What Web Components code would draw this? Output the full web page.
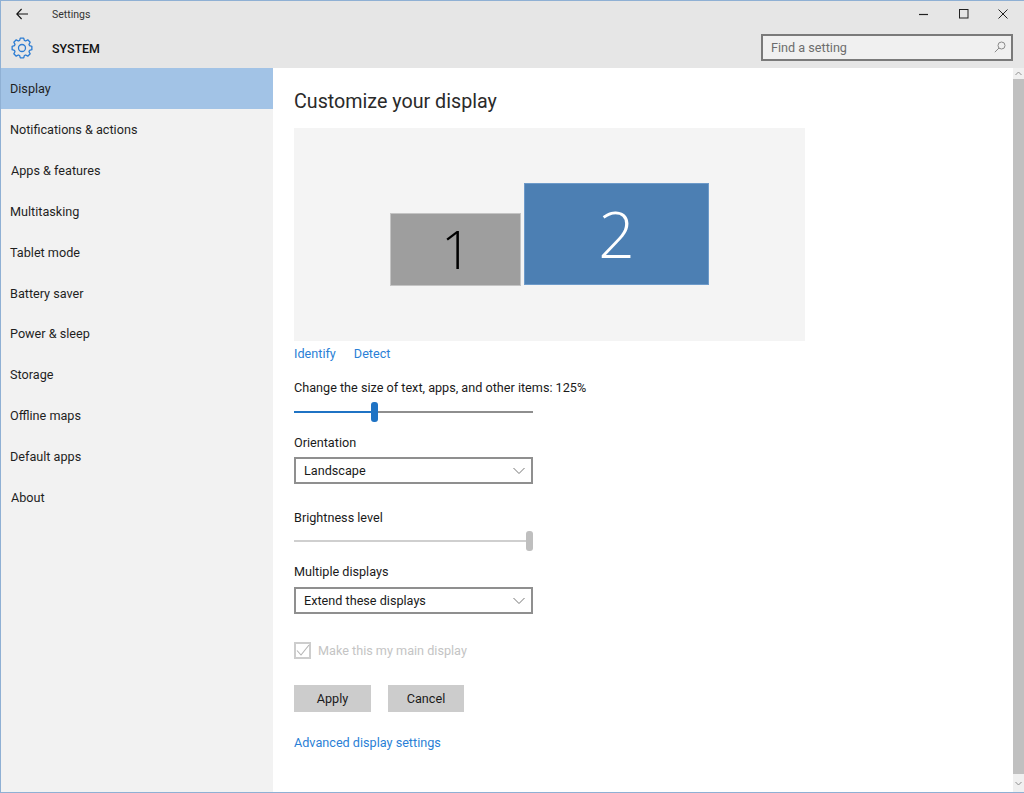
<!DOCTYPE html>
<html>
<head>
<meta charset="utf-8">
<title>Settings</title>
<style>
  html, body { margin: 0; padding: 0; height: 100%; overflow: hidden; background: #fff; }
  body { font-family: Roboto, "Noto Sans", sans-serif; font-size: 12.65px; color: #1a1a1a; }
</style>
</head>
<body>
<settings-window>
  <title-bar slot="header"></title-bar>
  <side-nav slot="nav">
    <nav-item selected>Display</nav-item>
    <nav-item>Notifications &amp; actions</nav-item>
    <nav-item style="padding-left:10px">Apps &amp; features</nav-item>
    <nav-item>Multitasking</nav-item>
    <nav-item>Tablet mode</nav-item>
    <nav-item>Battery saver</nav-item>
    <nav-item>Power &amp; sleep</nav-item>
    <nav-item>Storage</nav-item>
    <nav-item>Offline maps</nav-item>
    <nav-item>Default apps</nav-item>
    <nav-item style="padding-left:10px">About</nav-item>
  </side-nav>
  <display-page slot="main"></display-page>
  <scroll-bar slot="scroll"></scroll-bar>
</settings-window>

<script>
// 8 tooth gear outline, generated so the teeth stay even
function gearPath(cx, cy, outer, inner) {
  const points = [];
  for (let i = 0; i < 8; i++) {
    const a = (i * Math.PI) / 4;
    [[-0.3, inner], [-0.17, outer], [0.17, outer], [0.3, inner]].forEach(([d, r]) => {
      points.push((cx + r * Math.cos(a + d)).toFixed(2) + " " + (cy + r * Math.sin(a + d)).toFixed(2));
    });
  }
  return "M" + points.join("L") + "Z";
}

class SettingsWindow extends HTMLElement {
  constructor() {
    super();
    this.attachShadow({ mode: "open" });
    this.shadowRoot.innerHTML = `
      <style>
        :host { display: flex; flex-direction: column; box-sizing: border-box; width: 1024px; height: 793px;
          border: 1px solid #8fb0d4; border-right: 0; background: #fff; }
        .body { flex: 1; display: flex; min-height: 0; }
        ::slotted(side-nav) { flex: none; }
        ::slotted(display-page) { flex: 1; }
      </style>
      <slot name="header"></slot>
      <div class="body">
        <slot name="nav"></slot>
        <slot name="main"></slot>
        <slot name="scroll"></slot>
      </div>`;
  }
}
customElements.define("settings-window", SettingsWindow);

class TitleBar extends HTMLElement {
  constructor() {
    super();
    this.attachShadow({ mode: "open" });
    this.shadowRoot.innerHTML = `
      <style>
        :host { display: block; height: 67px; background: #e6e6e6; color: #1a1a1a; }
        .top { display: flex; align-items: center; height: 25px; }
        .back { width: 51px; padding-left: 15px; box-sizing: border-box; display: flex; }
        .name { flex: 1; font-size: 10.5px; color: #333; padding-top: 1px; }
        .caption { display: flex; padding-right: 1px; }
        .caption div { width: 39.5px; height: 25px; display: flex; align-items: center; justify-content: center; }
        .row { display: flex; align-items: center; box-sizing: border-box; height: 42px; padding: 2px 11px 0 10px; }
        .gear { width: 41px; display: flex; }
        .sys { flex: 1; font-size: 12.4px; font-weight: 500; color: #111; }
      </style>
      <div class="top">
        <div class="back">
          <svg width="12" height="12" viewBox="0 0 12 12" fill="none" stroke="#111" stroke-width="1.1">
            <path d="M.6 6H12M5.6 1 .8 6l4.8 5"/>
          </svg>
        </div>
        <div class="name">Settings</div>
        <div class="caption">
          <div><svg width="10" height="10"><path d="M0 5.5h9" stroke="#222" stroke-width="1.2"/></svg></div>
          <div><svg width="10" height="10"><rect x=".5" y=".5" width="8.5" height="8.5" fill="none" stroke="#222"/></svg></div>
          <div><svg width="10" height="10"><path d="M.5.5l9 9M9.5.5l-9 9" stroke="#222"/></svg></div>
        </div>
      </div>
      <div class="row">
        <div class="gear">
          <svg width="22" height="22" viewBox="0 0 22 22" fill="none" stroke="#2b7cd3" stroke-width="1.3" stroke-linejoin="round">
            <circle cx="11" cy="11" r="3.5"/>
            <path d="${gearPath(11, 11, 10, 7.9)}"/>
          </svg>
        </div>
        <div class="sys">SYSTEM</div>
        <search-box>Find a setting</search-box>
      </div>`;
  }
}
customElements.define("title-bar", TitleBar);

class SearchBox extends HTMLElement {
  constructor() {
    super();
    this.attachShadow({ mode: "open" });
    this.shadowRoot.innerHTML = `
      <style>
        :host { display: flex; align-items: center; box-sizing: border-box; width: 252px; height: 27px; margin-top: -2px;
          border: 2px solid #7a7a7a; background: #f0f0f0; padding: 0 5px 0 8px; color: #6d6d6d; font-size: 12.65px; }
        span { flex: 1; }
        svg { display: block; }
      </style>
      <span><slot></slot></span>
      <svg width="12" height="12" viewBox="0 0 12 12" fill="none" stroke="#8a8a8a">
        <circle cx="7.5" cy="4.5" r="3.5"/><path d="M5 7 .8 11.2"/>
      </svg>`;
  }
}
customElements.define("search-box", SearchBox);

class SideNav extends HTMLElement {
  constructor() {
    super();
    this.attachShadow({ mode: "open" });
    this.shadowRoot.innerHTML = `
      <style>
        :host { display: flex; flex-direction: column; width: 272px; background: #f2f2f2; }
      </style>
      <slot></slot>`;
  }
}
customElements.define("side-nav", SideNav);

class NavItem extends HTMLElement {
  constructor() {
    super();
    this.attachShadow({ mode: "open" });
    this.shadowRoot.innerHTML = `
      <style>
        :host { display: flex; align-items: center; box-sizing: border-box; height: 40.85px; padding: 1px 0 0 9px;
          font-size: 12.65px; color: #1f1f1f; }
        :host([selected]) { background: #a2c3e6; }
      </style>
      <slot></slot>`;
  }
}
customElements.define("nav-item", NavItem);

class DisplayPreview extends HTMLElement {
  constructor() {
    super();
    this.attachShadow({ mode: "open" });
    this.shadowRoot.innerHTML = `
      <style>
        :host { display: block; position: relative; width: 511px; height: 213px; background: #f4f4f4; }
        .mon { position: absolute; box-sizing: border-box; display: flex; align-items: center; justify-content: center;
          font-family: "Open Sans", sans-serif; font-weight: 300; line-height: 1; }
        .one { left: 96px; top: 85px; width: 131px; height: 73px; background: #9e9e9e; color: #000; border: 1px solid #c4c4c4;
          font-size: 53px; padding: 0 0 2px 2px; }
        .two { left: 230px; top: 55px; width: 185px; height: 102px; background: #4c7fb3; color: #fff; border: 1px solid #6d9ac9; font-size: 64px; }
      </style>
      <div class="mon one">1</div>
      <div class="mon two">2</div>`;
  }
}
customElements.define("display-preview", DisplayPreview);

class SettingLink extends HTMLElement {
  constructor() {
    super();
    this.attachShadow({ mode: "open" });
    this.shadowRoot.innerHTML = `
      <style>:host { display: inline-block; color: #2a7fd6; font-size: 12.65px; }</style>
      <slot></slot>`;
  }
}
customElements.define("setting-link", SettingLink);

class ValueSlider extends HTMLElement {
  static get observedAttributes() { return ["value", "disabled"]; }
  constructor() {
    super();
    this.attachShadow({ mode: "open" });
  }
  connectedCallback() { this.render(); }
  attributeChangedCallback() { this.render(); }
  render() {
    const value = this.getAttribute("value") || 0;
    this.shadowRoot.innerHTML = `
      <style>
        :host { display: block; position: relative; width: 239px; height: 20px; }
        .track { position: absolute; left: 0; right: 0; top: 9px; height: 2px; background: #8e8e8e; }
        .fill { position: absolute; left: 0; top: 9px; height: 2px; width: ${value}px; background: #1f73c4; }
        .thumb { position: absolute; top: 0; left: ${value - 4}px; width: 7px; height: 20px; border-radius: 3px; background: #1f73c4; }
        :host([disabled]) .track, :host([disabled]) .fill { background: #cfcfcf; }
        :host([disabled]) .thumb { background: #bfbfbf; }
      </style>
      <div class="track"></div>
      <div class="fill"></div>
      <div class="thumb"></div>`;
  }
}
customElements.define("value-slider", ValueSlider);

class ComboBox extends HTMLElement {
  constructor() {
    super();
    this.attachShadow({ mode: "open" });
    this.shadowRoot.innerHTML = `
      <style>
        :host { display: flex; align-items: center; box-sizing: border-box; width: 239px; height: 27px;
          border: 2px solid #8f8f8f; padding: 0 6px 0 8px; background: #fff; font-size: 12.65px; color: #1a1a1a; }
        span { flex: 1; }
      </style>
      <span><slot></slot></span>
      <svg width="12" height="8" viewBox="0 0 12 8" fill="none" stroke="#777"><path d="M.5 1 6 6.5 11.5 1"/></svg>`;
  }
}
customElements.define("combo-box", ComboBox);

class CheckRow extends HTMLElement {
  constructor() {
    super();
    this.attachShadow({ mode: "open" });
    this.shadowRoot.innerHTML = `
      <style>
        :host { display: flex; align-items: center; gap: 7px; color: #c4c4c4; font-size: 12.65px; }
        svg { display: block; }
      </style>
      <svg width="17" height="17" viewBox="0 0 17 17" fill="none" stroke="#cdcdcd">
        <rect x="1" y="1" width="15" height="15" stroke-width="2"/>
        <path d="M3 8.5 7 13 15 3" stroke-width="1.1" stroke="#b5b5b5"/>
      </svg>
      <span><slot></slot></span>`;
  }
}
customElements.define("check-row", CheckRow);

class PushButton extends HTMLElement {
  constructor() {
    super();
    this.attachShadow({ mode: "open" });
    this.shadowRoot.innerHTML = `
      <style>
        :host { display: flex; align-items: center; justify-content: center; width: 77px; height: 27px;
          background: #cccccc; font-size: 12.65px; color: #1a1a1a; }
      </style>
      <slot></slot>`;
  }
}
customElements.define("push-button", PushButton);

class ScrollBar extends HTMLElement {
  constructor() {
    super();
    this.attachShadow({ mode: "open" });
    this.shadowRoot.innerHTML = `
      <style>
        :host { display: flex; flex-direction: column; flex: none; width: 11px; background: #f0f0f0; }
        .btn { height: 11px; display: flex; align-items: center; justify-content: center; }
        .thumb { flex: 1; background: #c0c0c0; }
      </style>
      <div class="btn"><svg width="7" height="5" fill="none" stroke="#8f8f8f"><path d="M.5 4 3.5 1l3 3"/></svg></div>
      <div class="thumb"></div>
      <div class="btn" style="height:18px"><svg width="7" height="5" fill="none" stroke="#8f8f8f"><path d="M.5 1l3 3 3-3"/></svg></div>`;
  }
}
customElements.define("scroll-bar", ScrollBar);

class DisplayPage extends HTMLElement {
  constructor() {
    super();
    this.attachShadow({ mode: "open" });
    this.shadowRoot.innerHTML = `
      <style>
        :host { display: flex; flex-direction: column; align-items: flex-start; padding: 20px 0 0 21px; box-sizing: border-box; background: #fff; }
        h1 { margin: 0 0 12px; font-size: 19.7px; line-height: 28px; font-weight: 400; color: #2a2a2a; }
        .links { display: flex; gap: 18px; margin-top: 4px; line-height: 18px; }
        .label { font-size: 12.65px; line-height: 18px; color: #1a1a1a; }
      </style>
      <h1>Customize your display</h1>
      <display-preview></display-preview>
      <div class="links"><setting-link>Identify</setting-link><setting-link>Detect</setting-link></div>
      <div class="label" style="margin-top:16px">Change the size of text, apps, and other items: 125%</div>
      <value-slider value="81" style="margin-top:5px"></value-slider>
      <div class="label" style="margin-top:12px">Orientation</div>
      <combo-box style="margin-top:5px">Landscape</combo-box>
      <div class="label" style="margin-top:25px">Brightness level</div>
      <value-slider value="236" disabled style="margin-top:4px"></value-slider>
      <div class="label" style="margin-top:12px">Multiple displays</div>
      <combo-box style="margin-top:6px">Extend these displays</combo-box>
      <check-row style="margin-top:28px">Make this my main display</check-row>
      <div style="display:flex;gap:17px;margin-top:26px"><push-button>Apply</push-button><push-button style="width:76px">Cancel</push-button></div>
      <setting-link style="margin-top:22px;line-height:18px">Advanced display settings</setting-link>`;
  }
}
customElements.define("display-page", DisplayPage);
</script>
</body>
</html>
